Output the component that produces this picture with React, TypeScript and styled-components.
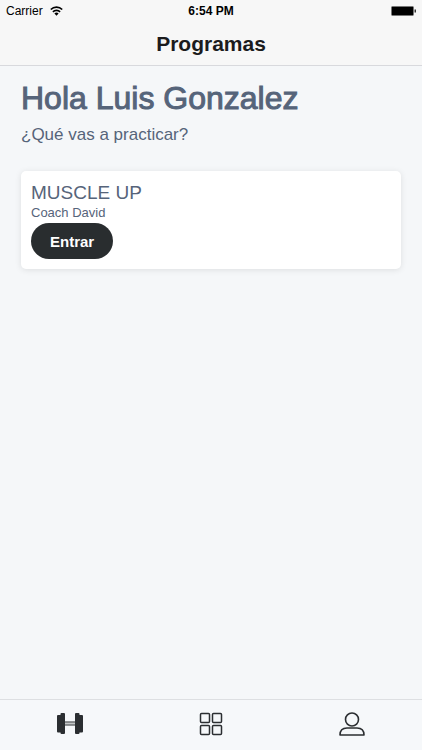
import React from "react";
import styled, { createGlobalStyle } from "styled-components";

const Global = createGlobalStyle`
  * { box-sizing: border-box; }
  body { margin: 0; background: #f5f7f9; font-family: "Liberation Sans", Arial, sans-serif; color: #1b1b1d; }
  h1, h2, h3, p { margin: 0; }
`;
const Screen = styled.div`
  min-height: 100vh;
  display: flex;
  flex-direction: column;
`;
const Header = styled.header`
  background: #f7f7f7;
  border-bottom: 1px solid #d8d9dd;
`;
const StatusBar = styled.div`
  display: grid;
  grid-template-columns: 1fr auto 1fr;
  align-items: center;
  height: 22px;
  padding: 0 6px;
  font-size: 12px;
  color: #000;
`;
const Carrier = styled.span`
  display: flex;
  align-items: center;
  gap: 7px;
`;
const Clock = styled.time`
  font-weight: 700;
`;
const Battery = styled.svg`
  justify-self: end;
`;
const Title = styled.h1`
  font-size: 21px;
  line-height: 43px;
  font-weight: 700;
  text-align: center;
`;
const Main = styled.main`
  flex: 1;
  padding: 11px 21px;
  color: #56647a;
`;
const Greeting = styled.h2`
  font-size: 32px;
  line-height: 42px;
  font-weight: 400;
  -webkit-text-stroke: 1px currentColor;
`;
const Question = styled.p`
  font-size: 17px;
  line-height: 32px;
`;
const Card = styled.article`
  margin-top: 20px;
  padding: 10px;
  border-radius: 5px;
  background: #fff;
  box-shadow: 0 1px 6px rgba(0, 0, 0, 0.1);
`;
const Program = styled.h3`
  font-size: 19px;
  line-height: 24px;
  font-weight: 400;
`;
const Coach = styled.p`
  font-size: 13px;
  line-height: 15px;
`;
const Enter = styled.button`
  display: block;
  margin-top: 3px;
  height: 36px;
  padding: 0 19px;
  border: 0;
  border-radius: 18px;
  background: #292d2f;
  color: #fff;
  font: 700 15px "Liberation Sans", Arial, sans-serif;
`;
const TabBar = styled.nav`
  display: grid;
  grid-template-columns: repeat(3, 1fr);
  height: 51px;
  padding-bottom: 3px;
  border-top: 1px solid #dddfe2;
  background: #f6f8fa;
`;
const Tab = styled.button`
  display: flex;
  align-items: center;
  justify-content: center;
  padding: 0;
  border: 0;
  background: none;
  color: #2b2e31;
`;

export default function App() {
  return (
    <Screen>
      <Global />
      <Header>
        <StatusBar>
          <Carrier>
            Carrier
            <svg width="13" height="10" viewBox="0 0 13 10" fill="none" stroke="#000" strokeWidth="1.7" aria-hidden="true">
              <path d="M.8 3.5a8.1 8.1 0 0 1 11.4 0M2.9 5.8a5.1 5.1 0 0 1 7.2 0" />
              <path d="M6.5 9.7 4.4 7.5a3 3 0 0 1 4.2 0Z" fill="#000" stroke="none" />
            </svg>
          </Carrier>
          <Clock>6:54 PM</Clock>
          <Battery width="25" height="10" viewBox="0 0 25 10" aria-hidden="true">
            <rect x=".5" y=".5" width="22" height="9" rx="1" stroke="#777" />
            <path d="M23.5 3.5h1.5v3h-1.5Z" fill="#333" />
          </Battery>
        </StatusBar>
        <Title>Programas</Title>
      </Header>
      <Main>
        <Greeting>Hola Luis Gonzalez</Greeting>
        <Question>¿Qué vas a practicar?</Question>
        <Card>
          <Program>MUSCLE UP</Program>
          <Coach>Coach David</Coach>
          <Enter type="button">Entrar</Enter>
        </Card>
      </Main>
      <TabBar aria-label="Principal">
        <Tab type="button" aria-label="Programas">
          <svg width="26" height="22" viewBox="0 0 26 22" fill="currentColor" aria-hidden="true">
            <path d="M1 2h3v17.500H1a1 1 0 0 1-1-1V3a1 1 0 0 1 1-1ZM4.500 0h2.500a1 1 0 0 1 1 1v19a1 1 0 0 1-1 1H4.500a1 1 0 0 1-1-1V1a1 1 0 0 1 1-1ZM19 0h2.500a1 1 0 0 1 1 1v19a1 1 0 0 1-1 1H19a1 1 0 0 1-1-1V1a1 1 0 0 1 1-1ZM22 2h3a1 1 0 0 1 1 1v15.500a1 1 0 0 1-1 1h-3Z" />
            <path d="M8 9h10M8 12h10" stroke="currentColor" strokeWidth="1" />
            <path d="M8 9.500h10v2H8Z" opacity=".25" />
          </svg>
        </Tab>
        <Tab type="button" aria-label="Categorías">
          <svg width="24" height="24" viewBox="0 0 24 24" fill="none" stroke="currentColor" strokeWidth="1.5" aria-hidden="true">
            <rect x="1.500" y="1.500" width="9" height="9" rx="1" />
            <rect x="13.500" y="1.500" width="9" height="9" rx="1" />
            <rect x="1.500" y="13.500" width="9" height="9" rx="1" />
            <rect x="13.500" y="13.500" width="9" height="9" rx="1" />
          </svg>
        </Tab>
        <Tab type="button" aria-label="Perfil">
          <svg width="26" height="24" viewBox="0 0 26 24" fill="none" stroke="currentColor" strokeWidth="1.6" aria-hidden="true">
            <circle cx="13" cy="7.500" r="6.500" />
            <path d="M1 23c0-4.500 2.500-7 7-7h10c4.500 0 7 2.500 7 7Z" strokeLinejoin="round" />
          </svg>
        </Tab>
      </TabBar>
    </Screen>
  );
}
